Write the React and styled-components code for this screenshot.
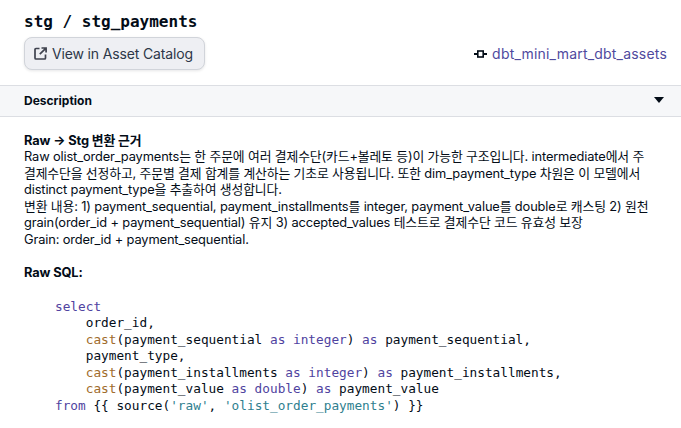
import React from 'react';
import styled, { createGlobalStyle } from 'styled-components';

const sans = `Inter, "Noto Sans CJK KR", sans-serif`;
const mono = `"DejaVu Sans Mono", monospace`;

const GlobalStyle = createGlobalStyle`
  html, body {
    margin: 0;
    background: #ffffff;
    overflow: hidden;
  }
`;

const Page = styled.div`
  width: 681px;
  height: 428px;
  overflow: hidden;
  font-family: ${sans};
  color: #030c17;
`;

const Header = styled.header`
  display: flex;
  flex-direction: column;
  gap: 5px;
  height: 85px;
  box-sizing: border-box;
  padding: 12px 14px 0 24px;
`;

const Title = styled.h1`
  margin: 0;
  font-family: ${mono};
  font-size: 16px;
  line-height: 20px;
  font-weight: 700;
`;

const HeaderRow = styled.div`
  display: flex;
  align-items: center;
  justify-content: space-between;
`;

const CatalogButton = styled.button`
  display: flex;
  align-items: center;
  gap: 5px;
  width: 181px;
  height: 33px;
  padding: 0 9px;
  box-sizing: border-box;
  border: 1px solid #d1d4da;
  border-radius: 8px;
  background: #eeeff3;
  box-shadow: 0 1px 3px rgba(3, 12, 23, 0.1);
  color: #2d3748;
  font-family: ${sans};
  font-size: 14px;
  letter-spacing: -0.15px;
  white-space: nowrap;

  svg {
    flex-shrink: 0;
  }
`;

const AssetLink = styled.a`
  display: flex;
  align-items: center;
  gap: 5px;
  color: #4f4a9e;
  font-size: 14px;
  letter-spacing: 0.2px;
  text-decoration: none;

  svg {
    flex-shrink: 0;
  }
`;

const SectionBar = styled.div`
  display: flex;
  align-items: center;
  justify-content: space-between;
  height: 32px;
  box-sizing: border-box;
  padding: 0 17px 2px 24px;
  border-top: 1px solid #dcdee3;
  border-bottom: 1px solid #dcdee3;
  background: #f6f7f9;
  font-size: 12px;
  font-weight: 700;
`;

const Caret = styled.span`
  width: 0;
  height: 0;
  border-left: 5px solid transparent;
  border-right: 5px solid transparent;
  border-top: 6px solid #030c17;
`;

const Body = styled.section`
  padding: 16px 24px 0;
  font-size: 12.85px;
  letter-spacing: -0.14px;
  line-height: 16.45px;
`;

const Line = styled.div`
  white-space: nowrap;
`;

const Heading = styled(Line)`
  font-weight: 700;
  margin-top: ${(p) => (p.$spaced ? '17px' : '0')};
`;

const Code = styled.pre`
  margin: 17px 0 0;
  padding-left: 31px;
  font-family: ${mono};
  font-size: 12.75px;
  letter-spacing: 0;
  line-height: 16.55px;
  color: #030c17;
`;

const Keyword = styled.span`
  color: #4f43a0;
`;

const Func = styled.span`
  color: #a06c2c;
`;

const Str = styled.span`
  color: #2f7f8f;
`;

const ExternalIcon = () => (
  <svg width="13" height="13" viewBox="0 0 13 13" fill="none" stroke="#3f424e" strokeWidth="1.7">
    <path d="M5.5 1.5H2a1 1 0 0 0-1 1V11a1 1 0 0 0 1 1h8.5a1 1 0 0 0 1-1V7.5" />
    <path d="M7.5 1h4.6v4.6M12 1.1L5.8 7.2" />
  </svg>
);

const AssetIcon = () => (
  <svg width="13" height="10" viewBox="0 0 13 10" fill="none" stroke="#030c17" strokeWidth="2">
    <path d="M0 5h3M10 5h3" />
    <rect x="3.8" y="2" width="5.4" height="6" strokeWidth="1.6" />
  </svg>
);

export default function App() {
  return (
    <Page>
      <GlobalStyle />
      <Header>
        <Title>stg / stg_payments</Title>
        <HeaderRow>
          <CatalogButton>
            <ExternalIcon />
            View in Asset Catalog
          </CatalogButton>
          <AssetLink href="#">
            <AssetIcon />
            dbt_mini_mart_dbt_assets
          </AssetLink>
        </HeaderRow>
      </Header>
      <SectionBar>
        Description
        <Caret />
      </SectionBar>
      <Body>
        <Heading>Raw → Stg 변환 근거</Heading>
        <Line>Raw olist_order_payments는 한 주문에 여러 결제수단(카드+볼레토 등)이 가능한 구조입니다. intermediate에서 주</Line>
        <Line>결제수단을 선정하고, 주문별 결제 합계를 계산하는 기초로 사용됩니다. 또한 dim_payment_type 차원은 이 모델에서</Line>
        <Line>distinct payment_type을 추출하여 생성합니다.</Line>
        <Line>변환 내용: 1) payment_sequential, payment_installments를 integer, payment_value를 double로 캐스팅 2) 원천</Line>
        <Line>grain(order_id + payment_sequential) 유지 3) accepted_values 테스트로 결제수단 코드 유효성 보장</Line>
        <Line>Grain: order_id + payment_sequential.</Line>
        <Heading $spaced>Raw SQL:</Heading>
        <Code>
          <Keyword>select</Keyword>{'\n'}
          {'    '}order_id,{'\n'}
          {'    '}<Func>cast</Func>(payment_sequential <Keyword>as integer</Keyword>) <Keyword>as</Keyword> payment_sequential,{'\n'}
          {'    '}payment_type,{'\n'}
          {'    '}<Func>cast</Func>(payment_installments <Keyword>as integer</Keyword>) <Keyword>as</Keyword> payment_installments,{'\n'}
          {'    '}<Func>cast</Func>(payment_value <Keyword>as double</Keyword>) <Keyword>as</Keyword> payment_value{'\n'}
          <Keyword>from</Keyword> {'{{'} source(<Str>'raw'</Str>, <Str>'olist_order_payments'</Str>) {'}}'}
        </Code>
      </Body>
    </Page>
  );
}
